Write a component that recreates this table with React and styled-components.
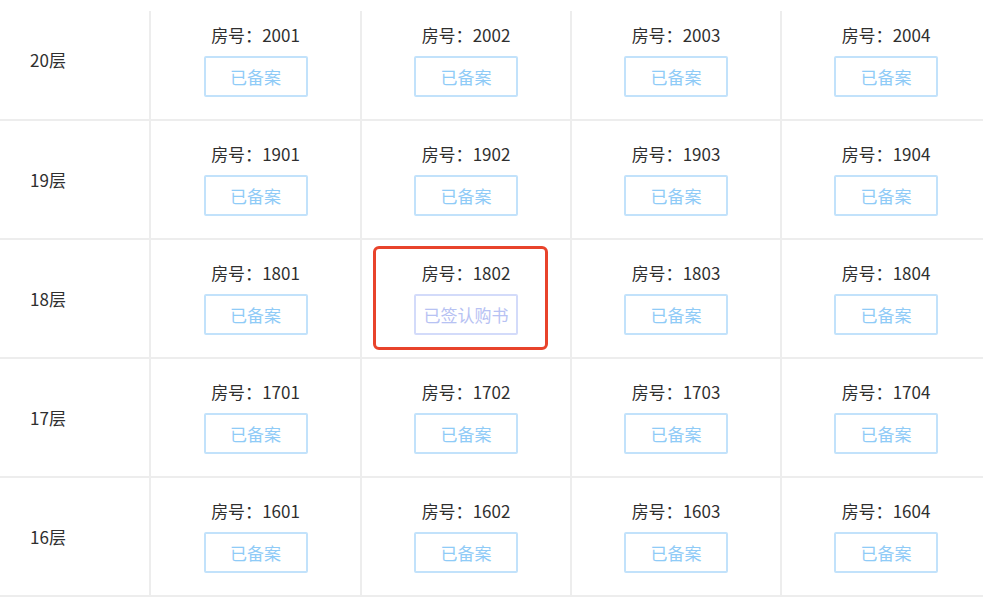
import React from "react";
import styled, { createGlobalStyle } from "styled-components";

const Global = createGlobalStyle`
  html, body { margin: 0; padding: 0; background: #fff; }
  body { font-family: "Noto Sans CJK SC", "Noto Sans", sans-serif; overflow: hidden; }
`;

const LINE = "#ededed";

const Table = styled.div`
  width: 983px;
  display: flex;
  flex-direction: column;
`;

const Row = styled.div`
  display: flex;
  height: ${(p) => p.$h}px;
  border-bottom: 2px solid ${LINE};
  box-sizing: border-box;
`;

const FloorLabel = styled.div`
  flex: 0 0 149px;
  display: flex;
  align-items: center;
  padding-left: 30px;
  box-sizing: border-box;
  font-size: 17px;
  color: #2f2f2f;
`;

const Cell = styled.div`
  position: relative;
  flex: 0 0 ${(p) => p.$w}px;
  box-sizing: border-box;
  display: flex;
  flex-direction: column;
  align-items: center;
  justify-content: center;
  gap: 10px;
  padding-left: 2px;
  padding-top: ${(p) => (p.$first ? 1 : 0)}px;
  background: linear-gradient(${LINE}, ${LINE}) left ${(p) => (p.$first ? 11 : 0)}px / 2px
    100% no-repeat;
`;

const RoomNo = styled.div`
  font-size: 17px;
  line-height: 22px;
  color: #2f2f2f;
`;

const StatusButton = styled.div`
  width: 104px;
  height: 41px;
  box-sizing: border-box;
  border: 2px solid ${(p) => (p.$signed ? "#d3dbfa" : "#c2e2fb")};
  border-radius: 2px;
  display: flex;
  align-items: center;
  justify-content: center;
  font-size: 17px;
  color: ${(p) => (p.$signed ? "#b7c2f3" : "#8fcbf7")};
  white-space: nowrap;
`;

const Highlight = styled.div`
  position: absolute;
  left: 13px;
  top: 6px;
  width: 175px;
  height: 104px;
  box-sizing: border-box;
  border: 3px solid #e8432b;
  border-radius: 6px;
  pointer-events: none;
`;

const floors = [20, 19, 18, 17, 16];

export default function App() {
  return (
    <>
      <Global />
      <Table>
        {floors.map((f, ri) => (
          <Row key={f} $h={ri === 0 ? 121 : 119}>
            <FloorLabel>{f}层</FloorLabel>
            {[1, 2, 3, 4].map((n, ci) => {
              const no = `${f}0${n}`;
              const signed = no === "1802";
              return (
                <Cell key={no} $first={ri === 0} $w={ci === 0 ? 211 : 210}>
                  <RoomNo>房号：{no}</RoomNo>
                  <StatusButton $signed={signed}>
                    {signed ? "已签认购书" : "已备案"}
                  </StatusButton>
                  {signed && <Highlight />}
                </Cell>
              );
            })}
          </Row>
        ))}
      </Table>
    </>
  );
}
